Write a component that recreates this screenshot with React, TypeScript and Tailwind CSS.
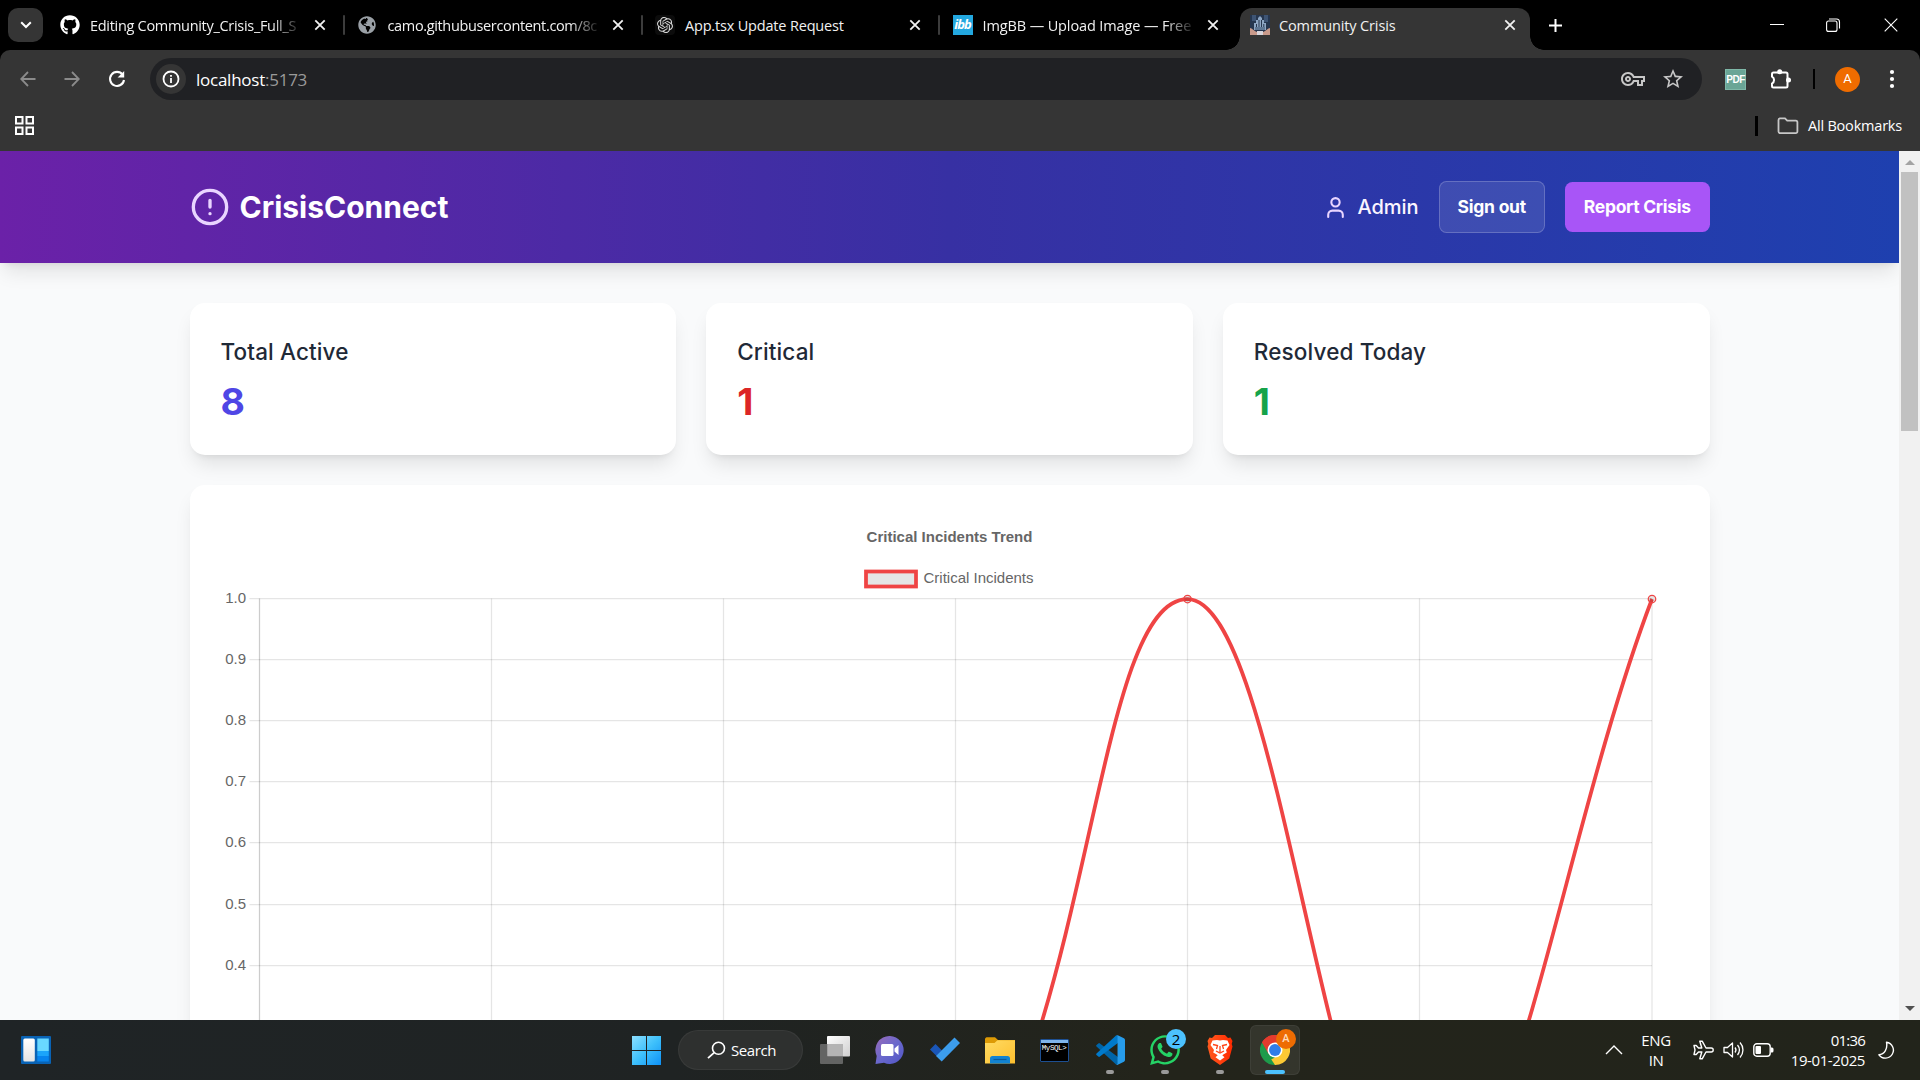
import React from "react";
import { FaGithub, FaWhatsapp, FaGlobeAmericas } from "react-icons/fa";
import { SiOpenai } from "react-icons/si";
import { MdStarOutline, MdOutlineVpnKey } from "react-icons/md";

const SEGOE = "font-['Open_Sans','Noto_Sans',sans-serif]";

/* ---------- browser chrome ---------- */

function CloseX() {
  return (
    <svg width="12" height="12" viewBox="0 0 12 12" className="shrink-0">
      <path d="M1.3 1.3 10.7 10.7M10.7 1.3 1.3 10.7" stroke="#f2f2f2" strokeWidth="1.8" />
    </svg>
  );
}

function CityFavicon() {
  return (
    <svg width="20" height="20" viewBox="0 0 20 20" className="shrink-0">
      <rect width="20" height="20" fill="#26364f" />
      <path d="M2 0h4v6H2zM14 0h4v7h-4z" fill="#3e5474" />
      <path d="M4 15V8h2V5h2V3l2-2 2 2v2h2v3h2v7z" fill="#8ea6c4" />
      <path d="M8.5 5h1v8h-1zM11 5h1v8h-1zM6 9h1v4H6zM13.3 9h1v4h-1z" fill="#26364f" />
      <path d="M5 12h10v3H5z" fill="#5f7795" />
      <path d="M0 13c2 0 4 3 7 4v3H0zM20 13c-2 0-4 3-7 4v3h7z" fill="#c99a8b" />
      <path d="M7 16h6v4H7z" fill="#d8d5dc" />
    </svg>
  );
}

type TabProps = { icon: React.ReactNode; title: string; fade?: boolean; divider?: boolean; spacing: string };

function Tab({ icon, title, fade, divider, spacing }: TabProps) {
  return (
    <div className="flex h-[34px] w-[297.5px] shrink-0 items-center pl-2.5">
      {icon}
      <div
        className={`ml-2.5 w-[211px] pt-px text-[14.5px] whitespace-nowrap text-[#f1f1f1] ${spacing} ${
          fade ? "[mask-image:linear-gradient(to_right,#000_86%,transparent_101%)]" : ""
        }`}
      >
        {title}
      </div>
      <div className="ml-[13px]">
        <CloseX />
      </div>
      {divider && <div className="ml-[17px] h-5 w-[2px] rounded bg-[#3c3c3c]" />}
    </div>
  );
}

function TabStrip() {
  return (
    <div className="flex h-[50px] items-start bg-black">
      <div className="mt-2 ml-2 flex h-[34px] w-[35px] items-center justify-center rounded-[10px] bg-[#353535]">
        <svg width="12" height="8" viewBox="0 0 12 8">
          <path d="M1.2 1.2 6 6 10.8 1.2" stroke="#fff" strokeWidth="2" fill="none" />
        </svg>
      </div>
      <div className="mt-2 ml-[7px] flex">
        <Tab icon={<FaGithub size={20} color="#fff" />} title="Editing Community_Crisis_Full_S" fade divider spacing="tracking-[-0.3px]" />
        <Tab icon={<FaGlobeAmericas size={18} color="#9aa0a6" className="mr-0.5" />} title="camo.githubusercontent.com/8c" fade divider spacing="tracking-[-0.35px]" />
        <Tab
          icon={
            <div className="flex size-5 items-center justify-center rounded bg-[#0c0c0c]">
              <SiOpenai size={16} color="#d8d8d8" />
            </div>
          }
          title="App.tsx Update Request"
          divider
          spacing="tracking-[-0.18px]"
        />
        <Tab
          icon={
            <div className="flex size-5 items-center justify-center bg-[#23a8e0] font-['Open_Sans'] text-[13px] font-bold tracking-[-0.9px] text-white italic">
              ibb
            </div>
          }
          title="ImgBB — Upload Image — Free"
          fade
          spacing="tracking-[-0.12px]"
        />
      </div>
      <div className="relative mt-2 flex h-[42px] w-[290px] items-start rounded-t-[12px] bg-[#353535] pl-2.5">
        <div className="absolute bottom-0 -left-[14px] size-[14px] bg-[radial-gradient(circle_at_0_0,transparent_13.5px,#353535_14px)]" />
        <div className="absolute -right-[14px] bottom-0 size-[14px] bg-[radial-gradient(circle_at_100%_0,transparent_13.5px,#353535_14px)]" />
        <div className="flex h-[34px] items-center">
          <CityFavicon />
          <div className="ml-[9px] w-[212px] pt-px text-[14.5px] tracking-[-0.13px] text-[#f1f1f1]">Community Crisis</div>
          <div className="ml-[13px]">
            <CloseX />
          </div>
        </div>
      </div>
      <div className="flex h-[50px] flex-1 items-center pl-[18px]">
        <svg width="15" height="15" viewBox="0 0 15 15">
          <path d="M7.5 1v13M1 7.5h13" stroke="#fff" strokeWidth="2" />
        </svg>
        <div className="flex-1" />
        <svg width="14" height="14" viewBox="0 0 14 14">
          <path d="M0 6.5h14" stroke="#fff" strokeWidth="1" />
        </svg>
        <svg width="15" height="14" viewBox="0 0 15 14" className="ml-[42px]">
          <rect x="0.6" y="3" width="10.4" height="10.4" rx="2" stroke="#fff" strokeWidth="1.1" fill="none" />
          <path d="M3 1h7.5a3 3 0 0 1 3 3v6.5" stroke="#fff" strokeWidth="1.1" fill="none" />
        </svg>
        <svg width="14" height="14" viewBox="0 0 14 14" className="mr-[22px] ml-[43px]">
          <path d="M.7.7l12.6 12.6M13.3.7.7 13.3" stroke="#fff" strokeWidth="1.1" />
        </svg>
      </div>
    </div>
  );
}

function Toolbar() {
  return (
    <div className="bg-black">
      <div className="flex h-[58px] items-center rounded-t-[10px] bg-[#353535]">
        <svg width="16" height="16" viewBox="0 0 16 16" className="ml-5">
          <path d="M15.5 8H1.5M8 1 1.2 8 8 15" stroke="#8b8b8b" strokeWidth="1.8" fill="none" />
        </svg>
        <svg width="16" height="16" viewBox="0 0 16 16" className="ml-[28px]">
          <path d="M.5 8h14M8 1l6.8 7L8 15" stroke="#8b8b8b" strokeWidth="1.8" fill="none" />
        </svg>
        <svg width="18" height="18" viewBox="0 0 18 18" className="ml-[28px]">
          <path d="M14.6 4.6A7 7 0 1 0 16 10" stroke="#fff" strokeWidth="2.1" fill="none" />
          <path d="M16.2 1v6.6H9.6z" fill="#fff" />
        </svg>
        <div className="ml-[24px] flex h-[42px] w-[1552px] items-center rounded-full bg-[#202124] pl-[6px]">
          <div className="flex size-[30px] items-center justify-center rounded-full bg-[#353535]">
            <svg width="18" height="18" viewBox="0 0 18 18">
              <circle cx="9" cy="9" r="7.5" stroke="#fff" strokeWidth="1.8" fill="none" />
              <path d="M9 8v5M9 5v1.8" stroke="#fff" strokeWidth="1.8" />
            </svg>
          </div>
          <div className="ml-[10px] pt-px text-[17px] tracking-[-0.25px] text-white">
            localhost<span className="text-[#9a9a9a]">:5173</span>
          </div>
          <div className="flex-1" />
          <MdOutlineVpnKey size={24} color="#c7c7c7" />
          <MdStarOutline size={24} color="#c7c7c7" className="mr-[17px] ml-[16px]" />
        </div>
        <div className="ml-[23px] flex size-[21px] items-center justify-center border border-[#7fb8a8] bg-[#6aa596] font-['Liberation_Sans'] text-[10px] font-bold tracking-[-0.5px] text-white">
          PDF
        </div>
        <svg width="22" height="22" viewBox="0 0 22 22" className="ml-[24px]">
          <path d="M3.5 4.500h12.500a1.500 1.500 0 0 1 1.500 1.500v12a1.500 1.500 0 0 1-1.500 1.500H3.500A1.500 1.500 0 0 1 2 18v-2.500a4 4 0 0 0 0-7V6a1.500 1.500 0 0 1 1.500-1.500z" stroke="#fff" strokeWidth="2" fill="none" />
          <circle cx="9.700" cy="3.800" r="2.500" fill="#fff" />
          <circle cx="18.500" cy="12" r="2.500" fill="#fff" />
        </svg>
        <div className="ml-[21px] h-5 w-[2px] bg-black" />
        <div className="ml-[20px] flex size-[25px] items-center justify-center rounded-full bg-[#ef6c00] font-['Roboto'] text-[13px] text-white">A</div>
        <svg width="6" height="20" viewBox="0 0 6 20" className="ml-[29px]">
          <circle cx="3" cy="3" r="2.1" fill="#fff" />
          <circle cx="3" cy="10" r="2.1" fill="#fff" />
          <circle cx="3" cy="17" r="2.1" fill="#fff" />
        </svg>
      </div>
      <div className="flex h-[43px] items-center bg-[#353535] pb-[8px]">
        <svg width="19" height="19" viewBox="0 0 19 19" className="ml-[15px]">
          {[1, 11.5].map((y) => [1, 11.5].map((x) => <rect key={`${x}-${y}`} x={x} y={y} width="6.5" height="6.5" stroke="#fff" strokeWidth="2" fill="none" />))}
        </svg>
        <div className="flex-1" />
        <div className="h-5 w-[2.5px] bg-black" />
        <svg width="22" height="18" viewBox="0 0 22 18" className="ml-[19px]">
          <path
            d="M1.5 14.6V3A1.6 1.6 0 0 1 3 1.4h5l2.2 2.2h8.6a1.6 1.6 0 0 1 1.6 1.6v9.4a1.6 1.6 0 0 1-1.6 1.6H3a1.6 1.6 0 0 1-1.5-1.6z"
            stroke="#c7c7c7"
            strokeWidth="1.8"
            fill="none"
          />
        </svg>
        <div className="mr-[18px] ml-[9px] pt-px text-[14.5px] tracking-[-0.2px] text-white">All Bookmarks</div>
      </div>
    </div>
  );
}

/* ---------- page ---------- */

function Header() {
  return (
    <div className="z-10 flex h-[112px] shrink-0 items-center bg-[linear-gradient(to_right,#6b21a8,#3730a3,#1e40af)] px-[189.5px] shadow-[0_12.5px_19px_-4px_rgba(0,0,0,0.1),0_5px_7.5px_-5px_rgba(0,0,0,0.1)]">
      <svg width="40" height="40" viewBox="0 0 24 24" fill="none" stroke="#e9d5ff" strokeWidth="2" strokeLinecap="round">
        <circle cx="12" cy="12" r="10" />
        <path d="M12 8v4M12 16h.01" />
      </svg>
      <div className="ml-2.5 text-[30px] font-bold text-white">CrisisConnect</div>
      <div className="flex-1" />
      <svg width="25" height="25" viewBox="0 0 24 24" fill="none" stroke="#e9d5ff" strokeWidth="2" strokeLinecap="round" strokeLinejoin="round">
        <path d="M19 21v-2a4 4 0 0 0-4-4H9a4 4 0 0 0-4 4v2" />
        <circle cx="12" cy="7" r="4" />
      </svg>
      <div className="ml-2.5 text-[20px] font-medium tracking-[-0.05px] text-[#faf5ff]">Admin</div>
      <button className="ml-5 flex h-[52px] w-[106.5px] items-center justify-center rounded-[7.5px] border border-white/20 bg-white/10 pt-px text-[17.5px] font-bold tracking-[-0.25px] text-white">
        Sign out
      </button>
      <button className="ml-5 flex h-[50px] w-[144.5px] items-center justify-center rounded-[7.5px] bg-[#a855f7] pt-px text-[17.5px] font-bold tracking-[-0.3px] text-white">
        Report Crisis
      </button>
    </div>
  );
}

const CARD_SHADOW = "shadow-[0_12.5px_19px_-4px_rgba(0,0,0,0.1),0_5px_7.5px_-5px_rgba(0,0,0,0.1)]";

function Stat({ label, value, color }: { label: string; value: string; color: string }) {
  return (
    <div className={`h-[152px] flex-1 rounded-[15px] bg-white px-[31px] py-[31px] ${CARD_SHADOW}`}>
      <div className="text-[22.5px] leading-[35px] font-medium tracking-[0.13px] text-[#1f2937]">{label}</div>
      <div className={`mt-2.5 text-[37.5px] leading-[45px] font-bold ${color}`}>{value}</div>
    </div>
  );
}

const GRID_X = [491.5, 723.5, 955.5, 1187.5, 1419.5, 1652];
const TICKS = ["1.0", "0.9", "0.8", "0.7", "0.6", "0.5", "0.4", "0.3"];

function TrendChart() {
  return (
    <div className={`h-[800px] shrink-0 rounded-[15px] bg-white ${CARD_SHADOW}`}>
      <svg width="1520" height="760" viewBox="190 485 1520 760" className="font-['Liberation_Sans',Arial,sans-serif]">
        <text x="949.5" y="542" textAnchor="middle" fontSize="15" fontWeight="bold" fill="#666">
          Critical Incidents Trend
        </text>
        <rect x="866" y="571.5" width="50" height="15" fill="#e5e5e5" stroke="#ef4444" strokeWidth="3.75" />
        <text x="923.500" y="583" fontSize="15" fill="#666">
          Critical Incidents
        </text>
        {TICKS.map((t, i) => {
          const y = Math.round(598 + i * 61.1) + 0.5;
          return (
            <g key={t}>
              <path d={`M249.5 ${y}H1652`} stroke="#000" strokeOpacity="0.1" strokeWidth="1.25" />
              <text x="246" y={y + 4.5} textAnchor="end" fontSize="15" fill="#666">
                {t}
              </text>
            </g>
          );
        })}
        {GRID_X.map((x) => (
          <path key={x} d={`M${x} 598.5V1220`} stroke="#000" strokeOpacity="0.1" strokeWidth="1.25" />
        ))}
        <path d="M259.5 598.5V1220" stroke="#000" strokeOpacity="0.2" strokeWidth="1.25" />
        <path
          d="M955.5 1211C1092.5 1030 1094.7 599 1187.5 599C1280.3 599 1326.7 1211 1419.5 1211C1512.3 1211 1559 844 1652 599"
          stroke="#ef4444"
          strokeWidth="3.75"
          fill="none"
        />
        {[1187.5, 1652].map((x) => (
          <circle key={x} cx={x} cy="599" r="3.75" fill="#000" fillOpacity="0.1" stroke="#ef4444" strokeWidth="1.25" />
        ))}
      </svg>
    </div>
  );
}

function Page() {
  return (
    <div className="flex h-[869px]">
      <div className="flex w-[1899px] flex-col overflow-hidden bg-[#f9fafb] font-['Inter',sans-serif]">
        <Header />
        <div className="mx-[189.5px] mt-10 flex shrink-0 gap-[30px]">
          <Stat label="Total Active" value="8" color="text-[#4f46e5]" />
          <Stat label="Critical" value="1" color="text-[#dc2626]" />
          <Stat label="Resolved Today" value="1" color="text-[#16a34a]" />
        </div>
        <div className="mx-[189.5px] mt-[30px]">
          <TrendChart />
        </div>
      </div>
      <div className="flex w-[21px] flex-col items-center bg-[#f1f1f1]">
        <svg width="10" height="5" viewBox="0 0 10 5" className="mt-[9px] shrink-0">
          <path d="M0 5 5 0l5 5z" fill="#a3a3a3" />
        </svg>
        <div className="mt-[7px] h-[259px] w-[17px] shrink-0 bg-[#c1c1c1]" />
        <div className="flex-1" />
        <svg width="10" height="5" viewBox="0 0 10 5" className="mb-[9px] shrink-0">
          <path d="M0 0l5 5 5-5z" fill="#505050" />
        </svg>
      </div>
    </div>
  );
}

/* ---------- taskbar ---------- */

function Slot({ children, running, active }: { children: React.ReactNode; running?: boolean; active?: boolean }) {
  return (
    <div className={`relative mr-[5px] flex size-[50px] items-center justify-center rounded-[6px] ${active ? "border border-white/5 bg-white/8" : ""}`}>
      {children}
      {running && <div className="absolute bottom-[1px] h-1 w-2 rounded-full bg-[#9a9a9a]" />}
      {active && <div className="absolute bottom-0 h-1 w-5 rounded-full bg-[#4cc2ff]" />}
    </div>
  );
}

function Taskbar() {
  return (
    <div className="flex h-[60px] items-center bg-[linear-gradient(to_right,#1f2426,#1f2323_35%,#23241b_60%,#22241b)]">
      <svg width="30" height="28" viewBox="0 0 30 28" className="ml-[21px]">
        <defs>
          <linearGradient id="wgt" x1="0" y1="0" x2="0" y2="1">
            <stop offset="0" stopColor="#fff" />
            <stop offset="1" stopColor="#e4e4e4" />
          </linearGradient>
        </defs>
        <rect width="30" height="28" rx="1" fill="#0963b5" />
        <rect x="2.3" y="2.5" width="11.5" height="23" rx="1.5" fill="url(#wgt)" />
        <path d="M16.3 2.5h11.5V15H16.3z" fill="#69d8ff" />
        <path d="M16.3 15h11.5v5H16.3z" fill="#1ba4fa" />
        <path d="M16.3 20h11.5v5.5H16.3z" fill="#0784ee" />
      </svg>
      <svg width="30" height="30" viewBox="0 0 30 30" className="ml-[581px]">
        <defs>
          <linearGradient id="win" x1="0" y1="0" x2="30" y2="30" gradientUnits="userSpaceOnUse">
            <stop offset="0" stopColor="#8fe0ff" />
            <stop offset="0.5" stopColor="#3ec0fb" />
            <stop offset="1" stopColor="#0c8ff6" />
          </linearGradient>
        </defs>
        <path d="M0 1h14v14H0zM15 1h14v14H15zM0 16h14v14H0zM15 16h14v14H15z" fill="url(#win)" />
      </svg>
      <div className="ml-[16px] flex h-10 w-[125px] items-center rounded-full border border-white/5 bg-[#2e302f] pl-[28px]">
        <svg width="19" height="18" viewBox="0 0 19 18">
          <circle cx="11.5" cy="7.3" r="6" stroke="#fff" strokeWidth="1.6" fill="none" />
          <path d="M7.2 11.6 1 17.2" stroke="#fff" strokeWidth="1.8" />
        </svg>
        <div className="ml-[5px] text-[15px] tracking-[-0.4px] text-white">Search</div>
      </div>
      <div className="ml-[7px] flex">
        <Slot>
          <svg width="30" height="30" viewBox="0 0 30 30">
            <defs>
              <linearGradient id="tv" x1="0" y1="0" x2="1" y2="1">
                <stop offset="0" stopColor="#fff" />
                <stop offset="1" stopColor="#cfcfcf" />
              </linearGradient>
            </defs>
            <rect x="7" y="1" width="23" height="20.5" rx="1" fill="url(#tv)" />
            <rect x="0" y="9" width="23" height="20" rx="1" fill="#747474" fillOpacity="0.8" />
            <path d="M7.5 9H23v12H7.5z" fill="#b4b4b4" />
          </svg>
        </Slot>
        <Slot>
          <svg width="30" height="30" viewBox="0 0 30 30">
            <defs>
              <linearGradient id="chat" x1="0" y1="0" x2="1" y2="1">
                <stop offset="0" stopColor="#9a6bb8" />
                <stop offset="0.5" stopColor="#6a68cc" />
                <stop offset="1" stopColor="#5055c6" />
              </linearGradient>
            </defs>
            <path d="M15 1a14 14 0 1 1-6 26.8L.5 29l1.2-8A14 14 0 0 1 15 1z" fill="url(#chat)" />
            <rect x="6" y="9" width="12.5" height="12" rx="1.5" fill="#fff" />
            <path d="M19.5 13.5 23.5 10v10l-4-3.5z" fill="#fff" />
          </svg>
        </Slot>
        <Slot>
          <svg width="30" height="30" viewBox="0 0 30 30">
            <path d="M5.5 9 0 14.5l6.5 6.5 5.5-5.5z" fill="#1a56b8" />
            <path d="M24.5 2.5 30 8 11.7 26.5 6 21z" fill="#3c9ded" />
          </svg>
        </Slot>
        <Slot>
          <svg width="30" height="30" viewBox="0 0 30 30">
            <defs>
              <linearGradient id="fld" x1="0" y1="0" x2="1" y2="1">
                <stop offset="0" stopColor="#ffdb63" />
                <stop offset="1" stopColor="#fdbf2e" />
              </linearGradient>
            </defs>
            <path d="M0 4a2 2 0 0 1 1.5-1.8H10L13 5h17v8H0z" fill="#dd9a05" />
            <path d="M0 8h9.500l3-2.800H30V28.500H0z" fill="url(#fld)" />
            <path d="M5 28.500V23.500a2.500 2.500 0 0 1 2.500-2.500h15a2.500 2.500 0 0 1 2.500 2.500v5z" fill="#1283d2" />
            <path d="M8.500 24.500h13" stroke="#0a5a9c" strokeWidth="1.200" />
          </svg>
        </Slot>
        <Slot>
          <div className="mr-[2px] flex h-[23px] w-[29px] flex-col rounded-[1px] border border-[#1d4f91] bg-black">
            <div className="h-[3px] bg-[#7fb4ea]" />
            <div className="mt-[1px] text-center font-['Liberation_Mono'] text-[7.5px] leading-[9px] tracking-[-0.4px] text-white">MySQL&gt;</div>
          </div>
        </Slot>
        <Slot running>
          <svg width="30" height="30" viewBox="0 0 100 100">
            <path d="M71 99.300 5 38.500a3.300 3.300 0 0 1 0-4.900l6-5.400a4.200 4.200 0 0 1 5.300-.2L94 87z" fill="#0065a9" />
            <path d="M71 .8 5 61.500a3.300 3.300 0 0 0 0 4.900l6 5.400a4.200 4.200 0 0 0 5.300.2L94 13z" fill="#007acc" />
            <path d="M75.900 99a6.200 6.200 0 0 1-7-1.200c2.300 2.300 6.200.7 6.200-2.500V4.700c0-3.200-3.900-4.800-6.200-2.500a6.200 6.200 0 0 1 7-1.200l20.600 9.900A6.200 6.200 0 0 1 100 16.500v67a6.200 6.200 0 0 1-3.500 5.600z" fill="#279ceb" />
          </svg>
        </Slot>
        <Slot running>
          <FaWhatsapp size={34} color="#25d366" />
          <div className="absolute top-[4px] right-[4px] flex size-5 items-center justify-center rounded-full bg-[#4cc2ff] text-[15px] text-black">2</div>
        </Slot>
        <Slot running>
          <svg width="26" height="30" viewBox="0 0 26 30">
            <defs>
              <linearGradient id="brv" x1="0" y1="0" x2="1" y2="0">
                <stop offset="0" stopColor="#ff5a1f" />
                <stop offset="1" stopColor="#ff2a00" />
              </linearGradient>
            </defs>
            <path d="M8 0h10l3 3 2.500-.5 2 3.500-.8 3 .8 2.500-3.200 12L13 30 3.700 23.500.5 11.500 1.300 9 .5 6l2-3.500L5 3z" fill="url(#brv)" />
            <path
              d="M13 5.500 16 5l4.500.500 2 4.500-3.500 5 .8 2.500-3.500 2-1 .8 2.200 2L13 25.500l-4.500-3.200 2.200-2-1-.8-3.500-2L7 15l-3.500-5 2-4.500L10 5z"
              fill="#fff"
            />
            <path d="M6 9.500l4.500 1L9.500 14M20 9.500l-4.500 1 1 3.500M9 16l4 2 4-2M13 11v6" stroke="#ff4316" strokeWidth="1.300" fill="none" />
          </svg>
        </Slot>
        <Slot active>
          <svg width="30" height="30" viewBox="0 0 48 48">
            <path d="M24 24 3.200 12A24 24 0 0 1 44.800 12z" fill="#e33b2e" />
            <path d="M24 24 44.800 12A24 24 0 0 1 24 48z" fill="#fcc934" />
            <path d="M24 24v24A24 24 0 0 1 3.200 12z" fill="#1e9b4b" />
            <path d="M24 12h20.800L34.400 30z" fill="#fcc934" />
            <path d="M34.400 30 24 48l-8-12z" fill="#fcc934" />
            <path d="M3.200 12 13.600 30 24 36l-8 4z" fill="#1e9b4b" />
            <path d="M24 12h20.800A24 24 0 0 0 3.200 12l10.400 18z" fill="#e33b2e" />
            <circle cx="24" cy="24" r="12" fill="#fff" />
            <circle cx="24" cy="24" r="9.500" fill="#2f7de9" />
          </svg>
          <div className="absolute top-[3px] right-[3px] flex size-5 items-center justify-center rounded-full bg-[#ee6c02] font-['Roboto'] text-[11px] font-medium text-[#ffdcbc]">A</div>
        </Slot>
      </div>
      <div className="flex-1" />
      <svg width="18" height="10" viewBox="0 0 18 10">
        <path d="M1 9 9 1l8 8" stroke="#fff" strokeWidth="1.400" fill="none" />
      </svg>
      <div className="ml-[12px] w-[42px] text-center text-[15px] leading-5 tracking-[-0.4px] text-white">
        ENG
        <br />
        IN
      </div>
      <svg width="21" height="20" viewBox="0 0 21 20" className="ml-[16px]">
        <path
          d="M1 5.500h2.200L5.500 8h3.300L6.800 1.200h2.400L13 8h5.200a2 2 0 0 1 0 4H13l-3.800 6.800H6.800L8.800 12H5.500l-2.300 2.500H1L2 10z"
          stroke="#fff"
          strokeWidth="1.400"
          strokeLinejoin="round"
          fill="none"
        />
      </svg>
      <svg width="21" height="18" viewBox="0 0 21 18" className="ml-[9px]">
        <path d="M1 6.500h3.500L9.500 2v14L4.500 11.500H1z" stroke="#fff" strokeWidth="1.300" strokeLinejoin="round" fill="none" />
        <path d="M12 6.500a4 4 0 0 1 0 5M14.500 4a7.500 7.500 0 0 1 0 10M17 1.500a11 11 0 0 1 0 15" stroke="#fff" strokeWidth="1.300" fill="none" />
      </svg>
      <svg width="21" height="14" viewBox="0 0 21 14" className="ml-[9px]">
        <rect x="0.800" y="0.800" width="16.400" height="12.400" rx="3" stroke="#fff" strokeWidth="1.400" fill="none" />
        <rect x="2.500" y="3" width="5.500" height="8" rx="1" fill="#fff" />
        <path d="M18 4.500h1a1.500 1.500 0 0 1 1.500 1.500v2A1.500 1.500 0 0 1 19 9.500h-1z" fill="#fff" />
      </svg>
      <div className="w-[91px] pb-px text-right text-[15px] leading-5 tracking-[-0.4px] text-white">
        <span className="tracking-[-0.8px]">01:36</span>
        <br />
        19-01-2025
      </div>
      <svg width="17" height="19" viewBox="0 0 17 19" className="mr-[25px] ml-[13px]">
        <path d="M8.500 1.200a8 8 0 1 1-7.600 12.600C6.500 13.500 9.800 8 8.500 1.200z" stroke="#fff" strokeWidth="1.400" strokeLinejoin="round" fill="none" />
      </svg>
    </div>
  );
}

export default function App() {
  return (
    <div className={`flex h-[1080px] w-[1920px] flex-col overflow-hidden ${SEGOE}`}>
      <TabStrip />
      <Toolbar />
      <Page />
      <Taskbar />
    </div>
  );
}
